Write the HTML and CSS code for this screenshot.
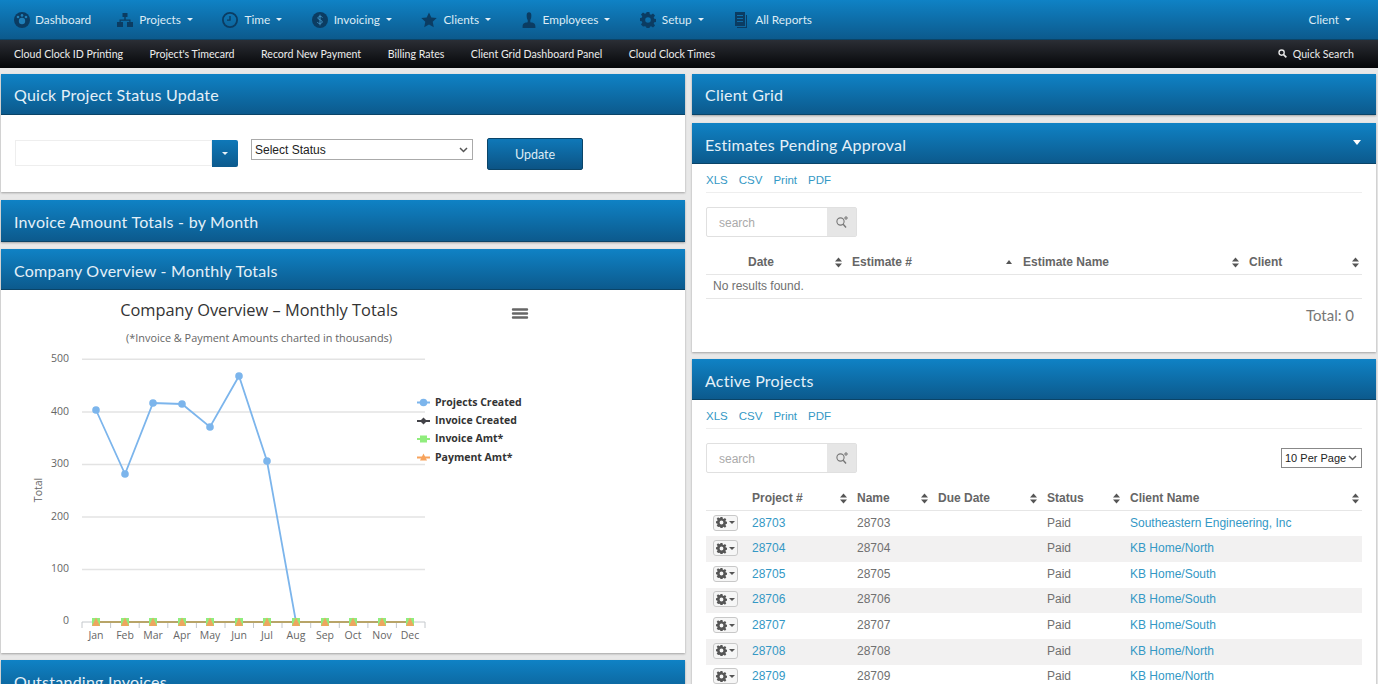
FILE: index.html
```html
<!DOCTYPE html>
<html lang="en">
<head>
  <meta charset="UTF-8" />
  <meta name="viewport" content="width=device-width, initial-scale=1.0" />
  <title>Dashboard</title>
  <link rel="stylesheet" href="styles.css">
</head>
<body>
  <svg class="defs" width="0" height="0" aria-hidden="true">
    <symbol id="sort" viewBox="0 0 7 11"><path d="M3.5 0.5 7 4.5H0zM3.5 10.5 7 6.5H0z"/></symbol>
    <symbol id="gear" viewBox="0 0 16 16"><path fill-rule="evenodd" d="M6.6 0h2.8l.4 2.2 1.3.6L13 1.500l2 2-1.300 1.900.6 1.300 2.200.4v2.800l-2.200.4-.6 1.300 1.300 1.900-2 2-1.900-1.300-1.300.6-.4 2.200H6.600l-.4-2.200-1.300-.6L3 14.500l-2-2 1.300-1.900-.6-1.300L-.5 8.900V6.100l2.200-.4.6-1.300L1 2.500l2-2 1.900 1.300 1.300-.6zM8 5.200a2.800 2.800 0 1 0 0 5.600 2.800 2.800 0 0 0 0-5.600z"/></symbol>
  </svg>

  <nav class="topnav">
    <a class="nav-item first"><svg class="nav-icon" viewBox="0 0 16 16"><circle cx="8" cy="8" r="8"/><circle cx="8" cy="9" r="3.200" fill="#1f7fb8"/><circle cx="4" cy="5" r="1.300" fill="#1f7fb8"/><circle cx="8" cy="3.400" r="1.300" fill="#1f7fb8"/><circle cx="12" cy="5" r="1.300" fill="#1f7fb8"/></svg>Dashboard</a>
    <a class="nav-item"><svg class="nav-icon" viewBox="0 0 16 14"><path d="M5.500 0h5v4h-5zM0 9h6v5H0zM10 9h6v5h-6zM7.300 4h1.400v2.500H13.500V9H12.300V7.800H3.700V9H2.500V6.500h4.800z"/></svg>Projects<i class="caret"></i></a>
    <a class="nav-item"><svg class="nav-icon" viewBox="0 0 16 16"><path fill-rule="evenodd" d="M8 0a8 8 0 1 1 0 16A8 8 0 0 1 8 0zm0 1.800a6.200 6.200 0 1 0 0 12.400A6.200 6.200 0 0 0 8 1.800z"/><path d="M7.300 4h1.400v4.700H5V7.500h2.300z"/></svg>Time<i class="caret"></i></a>
    <a class="nav-item"><svg class="nav-icon" viewBox="0 0 16 16"><circle cx="8" cy="8" r="8"/><path d="M10.500 5.500C10 4.300 6 3.900 5.800 5.900 5.700 8 10.400 7.600 10.300 10c-.1 2-4.300 1.700-5 .4M8 2.700v10.600" fill="none" stroke="#3f8fc0" stroke-width="1"/></svg>Invoicing<i class="caret"></i></a>
    <a class="nav-item"><svg class="nav-icon" viewBox="0 0 16 16"><path d="M8 .5l2.300 5 5.400.6-4 3.700 1.100 5.400L8 12.500l-4.800 2.700 1.100-5.400-4-3.700 5.400-.6z"/></svg>Clients<i class="caret"></i></a>
    <a class="nav-item"><svg class="nav-icon" viewBox="0 0 14 15"><path d="M4.800 3.200a2.200 2.900 0 0 1 4.400 0c0 2-.4 3.400-1 4.300v2C11 9.900 13 10.300 13 13.500V15H1v-1.500c0-3.200 2-3.600 4.800-4v-2c-.6-.9-1-2.300-1-4.300z"/></svg>Employees<i class="caret"></i></a>
    <a class="nav-item"><svg class="nav-icon" viewBox="0 0 16 16"><use href="#gear"/></svg>Setup<i class="caret"></i></a>
    <a class="nav-item"><svg class="nav-icon" viewBox="0 0 14 16"><path fill-rule="evenodd" d="M1 0h10v14H1zM3 3v1h6V3zm0 3v1h6V6zm0 3v1h6V9zM12 3h1v13H3v-1h9z"/></svg>All Reports</a>
    <a class="nav-item nav-right">Client<i class="caret"></i></a>
  </nav>

  <nav class="subnav">
    <a>Cloud Clock ID Printing</a>
    <a>Project's Timecard</a>
    <a>Record New Payment</a>
    <a>Billing Rates</a>
    <a>Client Grid Dashboard Panel</a>
    <a>Cloud Clock Times</a>
    <a class="quick-search"><svg class="quick-icon" viewBox="0 0 10 10"><circle cx="4" cy="4" r="2.900" fill="none" stroke="#e8e8e8" stroke-width="1.500"/><path d="M6.200 6.200 9.300 9.300" stroke="#e8e8e8" stroke-width="1.800"/></svg>Quick Search</a>
  </nav>

  <div class="columns">
    <div class="column">
      <section class="panel">
        <h3 class="panel-head">Quick Project Status Update</h3>
        <div class="status-form">
          <div class="combo"><input type="text" /><span class="combo-btn"><i class="caret small"></i></span></div>
          <select class="status-select"><option>Select Status</option></select>
          <button class="update-btn">Update</button>
        </div>
      </section>

      <section class="panel">
        <h3 class="panel-head tall">Invoice Amount Totals - by Month</h3>
      </section>

      <section class="panel">
        <h3 class="panel-head">Company Overview - Monthly Totals</h3>
        <svg class="chart" width="684" height="363" viewBox="1 290 684 363">
          <text class="chart-title" x="259" y="316">Company Overview – Monthly Totals</text>
          <text class="chart-sub" x="259" y="342">(*Invoice &amp; Payment Amounts charted in thousands)</text>
          <path d="M513 309.500h14M513 313.500h14M513 317.500h14" stroke="#666" stroke-width="2.400" stroke-linecap="round"/>

          <g stroke="#e3e3e3" stroke-width="1.500">
            <path d="M82 359.300H425M82 412H425M82 464.500H425M82 517H425M82 569.500H425"/>
          </g>
          <path d="M82 622H425M82 622v6M110.600 622v6M139.200 622v6M167.800 622v6M196.400 622v6M225 622v6M253.500 622v6M282 622v6M310.700 622v6M339.300 622v6M367.900 622v6M396.400 622v6M425 622v6" stroke="#c4c8cc" fill="none"/>

          <g class="y-labels">
            <text x="69" y="362">500</text>
            <text x="69" y="415">400</text>
            <text x="69" y="467">300</text>
            <text x="69" y="520">200</text>
            <text x="69" y="572">100</text>
            <text x="69" y="624">0</text>
          </g>
          <text class="axis-title" transform="translate(42 490) rotate(-90)">Total</text>
          <g class="x-labels">
            <text x="96" y="639">Jan</text>
            <text x="125" y="639">Feb</text>
            <text x="153" y="639">Mar</text>
            <text x="182" y="639">Apr</text>
            <text x="210" y="639">May</text>
            <text x="239" y="639">Jun</text>
            <text x="267" y="639">Jul</text>
            <text x="296" y="639">Aug</text>
            <text x="325" y="639">Sep</text>
            <text x="353" y="639">Oct</text>
            <text x="382" y="639">Nov</text>
            <text x="410" y="639">Dec</text>
          </g>

          <polyline points="96,410 125,474 153,403 182,404 210,427 239,376 267,461 296,622" fill="none" stroke="#7cb5ec" stroke-width="1.800"/>
          <g fill="#7cb5ec">
            <circle cx="96" cy="410" r="3.800"/><circle cx="125" cy="474" r="3.800"/><circle cx="153" cy="403" r="3.800"/><circle cx="182" cy="404" r="3.800"/><circle cx="210" cy="427" r="3.800"/><circle cx="239" cy="376" r="3.800"/><circle cx="267" cy="461" r="3.800"/>
          </g>
          <path d="M96 622H410" stroke="#b8a468" stroke-width="2"/>
          <g fill="#90ed7d">
            <rect x="92" y="618" width="8" height="8"/><rect x="121" y="618" width="8" height="8"/><rect x="149" y="618" width="8" height="8"/><rect x="178" y="618" width="8" height="8"/><rect x="206" y="618" width="8" height="8"/><rect x="235" y="618" width="8" height="8"/><rect x="263" y="618" width="8" height="8"/><rect x="292" y="618" width="8" height="8"/><rect x="321" y="618" width="8" height="8"/><rect x="349" y="618" width="8" height="8"/><rect x="378" y="618" width="8" height="8"/><rect x="406" y="618" width="8" height="8"/>
          </g>
          <g fill="#eda65f">
            <path d="M96 617.500l4 8.500h-8zM125 617.500l4 8.500h-8zM153 617.500l4 8.500h-8zM182 617.500l4 8.500h-8zM210 617.500l4 8.500h-8zM239 617.500l4 8.500h-8zM267 617.500l4 8.500h-8zM296 617.500l4 8.500h-8zM325 617.500l4 8.500h-8zM353 617.500l4 8.500h-8zM382 617.500l4 8.500h-8zM410 617.500l4 8.500h-8z"/>
          </g>

          <g class="legend">
            <path d="M417 402.500h13" stroke="#7cb5ec" stroke-width="2"/><circle cx="423.500" cy="402.500" r="3.800" fill="#7cb5ec"/>
            <text x="435" y="406">Projects Created</text>
            <path d="M417 421h13" stroke="#434348" stroke-width="2"/><path d="M423.500 417.500l3.500 3.500-3.500 3.500-3.500-3.500z" fill="#434348"/>
            <text x="435" y="424">Invoice Created</text>
            <path d="M417 439h13" stroke="#90ed7d" stroke-width="2"/><rect x="420" y="435.500" width="7" height="7" fill="#90ed7d"/>
            <text x="435" y="442">Invoice Amt*</text>
            <path d="M417 457.500h13" stroke="#f7a35c" stroke-width="2"/><path d="M423.500 453.500l3.500 7h-7z" fill="#f7a35c"/>
            <text x="435" y="461">Payment Amt*</text>
          </g>
        </svg>
      </section>

      <section class="panel">
        <h3 class="panel-head">Outstanding Invoices</h3>
      </section>
    </div>

    <div class="column">
      <section class="panel">
        <h3 class="panel-head">Client Grid</h3>
      </section>

      <section class="panel">
        <h3 class="panel-head">Estimates Pending Approval<i class="head-caret"></i></h3>
        <div class="grid-body estimates">
          <div class="export-links"><a>XLS</a><a>CSV</a><a>Print</a><a>PDF</a></div>
          <div class="grid-tools">
            <div class="search-box"><span class="search-input">search</span><span class="search-btn"><svg viewBox="0 0 14 14"><circle cx="5.500" cy="6.500" r="3.600" fill="none" stroke="#777" stroke-width="1.100"/><path d="M8.200 9.200 11 12.500" stroke="#777" stroke-width="1.400"/><path d="M11 1v4M9 3h4" stroke="#777"/></svg></span></div>
          </div>
          <table class="grid est-table">
            <thead>
              <tr>
                <th></th>
                <th><div class="th-in">Date<svg class="sort"><use href="#sort"/></svg></div></th>
                <th><div class="th-in">Estimate #<i class="sort-up"></i></div></th>
                <th><div class="th-in">Estimate Name<svg class="sort"><use href="#sort"/></svg></div></th>
                <th><div class="th-in">Client<svg class="sort"><use href="#sort"/></svg></div></th>
              </tr>
            </thead>
            <tbody>
              <tr><td colspan="5">No results found.</td></tr>
            </tbody>
          </table>
          <div class="grid-total">Total: 0</div>
        </div>
      </section>

      <section class="panel">
        <h3 class="panel-head">Active Projects</h3>
        <div class="grid-body">
          <div class="export-links"><a>XLS</a><a>CSV</a><a>Print</a><a>PDF</a></div>
          <div class="grid-tools">
            <div class="search-box"><span class="search-input">search</span><span class="search-btn"><svg viewBox="0 0 14 14"><circle cx="5.500" cy="6.500" r="3.600" fill="none" stroke="#777" stroke-width="1.100"/><path d="M8.200 9.200 11 12.500" stroke="#777" stroke-width="1.400"/><path d="M11 1v4M9 3h4" stroke="#777"/></svg></span></div>
            <select class="per-page"><option>10 Per Page</option></select>
          </div>
          <table class="grid proj-table">
            <thead>
              <tr>
                <th></th>
                <th><div class="th-in">Project #<svg class="sort"><use href="#sort"/></svg></div></th>
                <th><div class="th-in">Name<svg class="sort"><use href="#sort"/></svg></div></th>
                <th><div class="th-in">Due Date<svg class="sort"><use href="#sort"/></svg></div></th>
                <th><div class="th-in">Status<svg class="sort"><use href="#sort"/></svg></div></th>
                <th><div class="th-in">Client Name<svg class="sort"><use href="#sort"/></svg></div></th>
              </tr>
            </thead>
            <tbody>
              <tr><td><span class="gear-btn"><svg><use href="#gear"/></svg><i class="caret dark"></i></span></td><td><a>28703</a></td><td>28703</td><td></td><td>Paid</td><td><a>Southeastern Engineering, Inc</a></td></tr>
              <tr><td><span class="gear-btn"><svg><use href="#gear"/></svg><i class="caret dark"></i></span></td><td><a>28704</a></td><td>28704</td><td></td><td>Paid</td><td><a>KB Home/North</a></td></tr>
              <tr><td><span class="gear-btn"><svg><use href="#gear"/></svg><i class="caret dark"></i></span></td><td><a>28705</a></td><td>28705</td><td></td><td>Paid</td><td><a>KB Home/South</a></td></tr>
              <tr><td><span class="gear-btn"><svg><use href="#gear"/></svg><i class="caret dark"></i></span></td><td><a>28706</a></td><td>28706</td><td></td><td>Paid</td><td><a>KB Home/South</a></td></tr>
              <tr><td><span class="gear-btn"><svg><use href="#gear"/></svg><i class="caret dark"></i></span></td><td><a>28707</a></td><td>28707</td><td></td><td>Paid</td><td><a>KB Home/South</a></td></tr>
              <tr><td><span class="gear-btn"><svg><use href="#gear"/></svg><i class="caret dark"></i></span></td><td><a>28708</a></td><td>28708</td><td></td><td>Paid</td><td><a>KB Home/North</a></td></tr>
              <tr><td><span class="gear-btn"><svg><use href="#gear"/></svg><i class="caret dark"></i></span></td><td><a>28709</a></td><td>28709</td><td></td><td>Paid</td><td><a>KB Home/North</a></td></tr>
            </tbody>
          </table>
        </div>
      </section>
    </div>
  </div>
</body>
</html>
```

FILE: styles.css
```css
html, body {
  margin: 0;
  height: 684px;
  overflow: hidden;
}
body {
  font-family: "Liberation Sans", Arial, sans-serif;
  font-size: 12px;
  color: #666;
  background: #e8e8e8;
}
.defs {
  position: absolute;
}

/* top nav */
.topnav {
  display: flex;
  align-items: center;
  gap: 29.500px;
  height: 40px;
  padding: 0 14px;
  box-sizing: border-box;
  background: linear-gradient(#0f82c5, #0c5a8d);
  border-bottom: 1px solid #0a4468;
  font-family: Lato, sans-serif;
  font-size: 11.800px;
  color: #dcebf5;
}
.nav-item {
  display: flex;
  align-items: center;
  white-space: nowrap;
}
.nav-icon {
  width: 16px;
  height: 16px;
  margin-right: 6px;
  fill: #0b3c62;
}
.nav-right {
  margin-left: auto;
  margin-right: 13px;
}
.first {
  margin-right: -3.500px;
}
.first .nav-icon {
  margin-right: 5px;
}
.caret {
  display: inline-block;
  margin-left: 6px;
  border-top: 3px solid #e8f1f7;
  border-left: 3px solid transparent;
  border-right: 3px solid transparent;
}
.caret.small {
  margin: 0;
}
.caret.dark {
  margin-left: 2px;
  border-top-color: #555;
}

/* black sub nav */
.subnav {
  display: flex;
  align-items: center;
  gap: 26.500px;
  height: 28px;
  padding: 0 24px 1px 14px;
  box-sizing: border-box;
  background: linear-gradient(#2b2e35, #050608);
  font-family: Lato, sans-serif;
  font-size: 10.600px;
  color: #ececec;
}
.quick-search {
  display: flex;
  align-items: center;
  margin-left: auto;
}
.quick-icon {
  width: 9px;
  height: 9px;
  margin-right: 6px;
}

/* panels */
.columns {
  display: grid;
  grid-template-columns: 684px 684px;
  gap: 7px;
  padding: 6px 2px 0 1px;
}
.column {
  display: flex;
  flex-direction: column;
  gap: 7px;
}
.panel {
  background: #fff;
  box-shadow: 0 1px 2px rgba(0,0,0,0.3);
}
.panel:first-child {
  margin-bottom: 1px;
}
.panel-head {
  position: relative;
  margin: 0;
  height: 40px;
  padding: 0 13px;
  line-height: 44px;
  background: linear-gradient(#0f82c5, #0c5a8d);
  border-bottom: 1px solid #0a4468;
  font-family: Lato, sans-serif;
  font-size: 16px;
  font-weight: normal;
  letter-spacing: 0.250px;
  color: #e4f0f8;
}
.panel-head.tall {
  height: 41px;
}
.panel:first-child .panel-head {
  line-height: 42px;
}
.head-caret {
  position: absolute;
  top: 17px;
  right: 15px;
  border-top: 5px solid #fff;
  border-left: 4px solid transparent;
  border-right: 4px solid transparent;
}

/* status form */
.status-form {
  display: flex;
  align-items: flex-start;
  height: 77px;
  padding: 23px 0 0 14px;
  box-sizing: border-box;
}
.combo {
  display: flex;
  margin: 2px 13px 0 0;
}
.combo input {
  width: 197px;
  height: 26px;
  padding: 0;
  box-sizing: border-box;
  border: 1px solid #eee;
  outline: none;
}
.combo-btn {
  display: flex;
  align-items: center;
  justify-content: center;
  width: 26px;
  height: 27px;
  background: linear-gradient(#0f78b8, #0c5a8d);
  border-radius: 0 2px 2px 0;
}
.status-select, .per-page {
  appearance: none;
  padding: 0 0 0 3px;
  font-family: "Liberation Sans", Arial, sans-serif;
  font-size: 12px;
  color: #222;
  background: #fff url("data:image/svg+xml,%3Csvg xmlns='http://www.w3.org/2000/svg' width='9' height='6'%3E%3Cpath d='M1 1l3.500 3.500L8 1' fill='none' stroke='%23555' stroke-width='1.500'/%3E%3C/svg%3E") no-repeat right 4px center;
  border: 1px solid #aaa;
}
.status-select {
  width: 222px;
  height: 21px;
  margin: 1px 14px 0 0;
}
.update-btn {
  width: 96px;
  height: 32px;
  background: linear-gradient(#0f78b8, #0c5485);
  color: #dcebf5;
  border: 1px solid #0a4468;
  border-radius: 2px;
  font-family: Lato, sans-serif;
  font-size: 12.500px;
}

/* chart */
.chart {
  display: block;
  font-family: "Open Sans", sans-serif;
}
.chart-title {
  font-size: 16.400px;
  text-anchor: middle;
  fill: #333;
}
.chart-sub {
  font-size: 10.900px;
  text-anchor: middle;
  fill: #666;
}
.y-labels text {
  font-size: 10.500px;
  text-anchor: end;
  fill: #666;
}
.x-labels text {
  font-size: 10.500px;
  text-anchor: middle;
  fill: #666;
}
.axis-title {
  font-size: 10.500px;
  text-anchor: middle;
  fill: #666;
}
.legend text {
  font-size: 10.500px;
  font-weight: bold;
  fill: #333;
}

/* grids */
.grid-body {
  padding: 0 14px;
}
.estimates {
  height: 188px;
  box-sizing: border-box;
}
.export-links {
  display: flex;
  gap: 11px;
  height: 28px;
  line-height: 33px;
  font-size: 11.500px;
  border-bottom: 1px solid #eee;
  color: #3498c5;
}
.grid-tools {
  display: flex;
  align-items: center;
  justify-content: space-between;
  margin: 14px 0 13px;
}
.search-box {
  display: flex;
  width: 151px;
  height: 30px;
  box-sizing: border-box;
  border: 1px solid #e0e0e0;
  border-radius: 2px;
}
.search-input {
  flex: 1;
  padding-left: 12px;
  line-height: 31px;
  color: #aaa;
}
.search-btn {
  display: flex;
  align-items: center;
  justify-content: center;
  width: 29px;
  background: #e6e6e6;
}
.search-btn svg {
  width: 14px;
  height: 14px;
}
.per-page {
  width: 81px;
  height: 20px;
  font-size: 11px;
  border-color: #888;
}
.grid {
  width: 100%;
  table-layout: fixed;
  border-collapse: collapse;
}
.grid th {
  height: 24px;
  padding: 0 3px 0 7px;
  text-align: left;
  font-weight: bold;
  color: #666;
  border-bottom: 1px solid #e6e6e6;
}
.grid td {
  height: 25.700px;
  padding: 0 0 2px 7px;
  box-sizing: border-box;
  border: none;
  color: #707070;
}
.grid a {
  color: #3498c5;
}
.th-in {
  display: flex;
  align-items: center;
  justify-content: space-between;
}
.sort {
  width: 7px;
  height: 11px;
  fill: #555;
}
.sort-up {
  margin-right: 1px;
  border-bottom: 4px solid #555;
  border-left: 3px solid transparent;
  border-right: 3px solid transparent;
}
.est-table th:nth-child(1) { width: 25px; }
.est-table th:nth-child(2) { width: 94px; }
.est-table th:nth-child(3) { width: 161px; }
.est-table th:nth-child(4) { width: 216px; }
.est-table td {
  height: 24px;
  border-bottom: 1px solid #e6e6e6;
}
.grid-total {
  padding: 7px 8px 0 0;
  text-align: right;
  font-family: Lato, sans-serif;
  font-size: 15px;
  color: #777;
}
.proj-table th:nth-child(1) { width: 29px; }
.proj-table th:nth-child(2) { width: 95px; }
.proj-table th:nth-child(3) { width: 71px; }
.proj-table th:nth-child(4) { width: 99px; }
.proj-table th:nth-child(5) { width: 73px; }
.proj-table tbody tr:nth-child(even) {
  background: #f2f1f1;
}
.gear-btn {
  display: inline-flex;
  align-items: center;
  justify-content: center;
  width: 25px;
  height: 16px;
  box-sizing: border-box;
  vertical-align: middle;
  background: #f6f6f6;
  border: 1px solid #c8c8c8;
  border-radius: 3px;
}
.gear-btn svg {
  width: 11px;
  height: 11px;
  fill: #555;
}
```
